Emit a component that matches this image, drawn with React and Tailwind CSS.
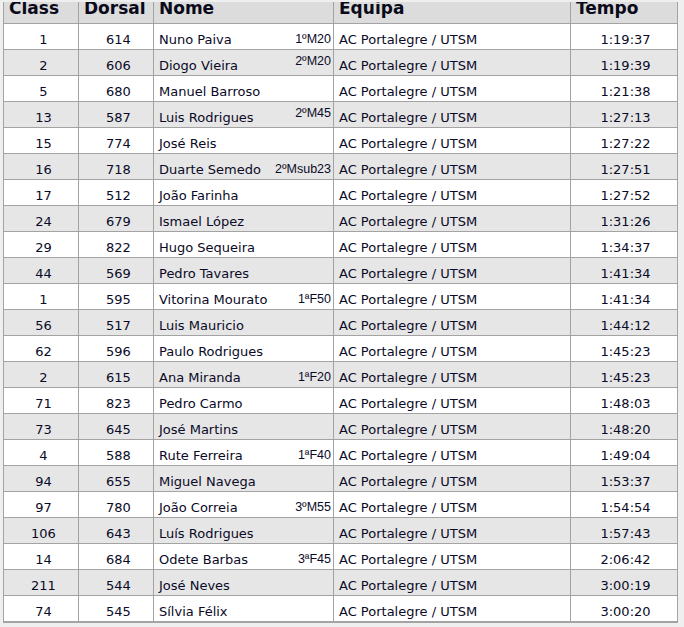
import React from "react";

const rows = [
  ["1", "614", "Nuno Paiva", "1ºM20", "1:19:37"],
  ["2", "606", "Diogo Vieira", "2ºM20", "1:19:39", true],
  ["5", "680", "Manuel Barroso", "", "1:21:38"],
  ["13", "587", "Luis Rodrigues", "2ºM45", "1:27:13", true],
  ["15", "774", "José Reis", "", "1:27:22"],
  ["16", "718", "Duarte Semedo", "2ºMsub23", "1:27:51"],
  ["17", "512", "João Farinha", "", "1:27:52"],
  ["24", "679", "Ismael López", "", "1:31:26"],
  ["29", "822", "Hugo Sequeira", "", "1:34:37"],
  ["44", "569", "Pedro Tavares", "", "1:41:34"],
  ["1", "595", "Vitorina Mourato", "1ªF50", "1:41:34"],
  ["56", "517", "Luis Mauricio", "", "1:44:12"],
  ["62", "596", "Paulo Rodrigues", "", "1:45:23"],
  ["2", "615", "Ana Miranda", "1ªF20", "1:45:23"],
  ["71", "823", "Pedro Carmo", "", "1:48:03"],
  ["73", "645", "José Martins", "", "1:48:20"],
  ["4", "588", "Rute Ferreira", "1ªF40", "1:49:04"],
  ["94", "655", "Miguel Navega", "", "1:53:37"],
  ["97", "780", "João Correia", "3ºM55", "1:54:54"],
  ["106", "643", "Luís Rodrigues", "", "1:57:43"],
  ["14", "684", "Odete Barbas", "3ªF45", "2:06:42"],
  ["211", "544", "José Neves", "", "3:00:19"],
  ["74", "545", "Sílvia Félix", "", "3:00:20"],
];

const headers = ["Class", "Dorsal", "Nome", "Equipa", "Tempo"];

export default function App() {
  return (
    <div className="h-[627px] w-[684px] overflow-hidden bg-[#efefef] font-['DejaVu_Sans',Verdana,sans-serif] text-[#0a0a26]">
      <div className="h-[2px]" />
      <div className="h-[625px] overflow-hidden pl-[3px]">
        <div className="-mt-[5px] grid w-[675px] grid-cols-[75px_75px_180px_237px_107px] border-b border-l border-t border-[#a3a3a3]">
          {/* Header */}
          {headers.map((h) => (
            <div
              key={h}
              className="h-[26px] border-b border-r border-[#a3a3a3] bg-[#dcdcdc] pl-[5px] text-[17px] font-bold leading-[20px] text-[#0a0a1a]"
            >
              {h}
            </div>
          ))}

          {/* Rows */}
          {rows.map((r, i) => {
            const bg = i % 2 === 1 ? "bg-[#e6e6e6]" : "bg-white";
            const cell = `h-[26px] border-b border-r border-[#a3a3a3] pt-[8px] text-[13px] leading-[16px] ${bg}`;
            return (
              <React.Fragment key={i}>
                <div className={`${cell} pl-[5px] text-center`}>{r[0]}</div>
                <div className={`${cell} pl-[5px] text-center`}>{r[1]}</div>
                <div className={`${cell} flex items-start justify-between pl-[5px] pr-[2px]`}>
                  <span>{r[2]}</span>
                  {r[3] && (
                    <span
                      className={`font-['Liberation_Sans',Arial,sans-serif] text-[12.5px] leading-[14px] ${
                        r[5] ? "-mt-[4px]" : "mt-0"
                      }`}
                    >
                      {r[3]}
                    </span>
                  )}
                </div>
                <div className={`${cell} pl-[5px]`}>AC Portalegre / UTSM</div>
                <div className={`${cell} pl-[3px] text-center`}>{r[4]}</div>
              </React.Fragment>
            );
          })}
        </div>
      </div>
    </div>
  );
}
